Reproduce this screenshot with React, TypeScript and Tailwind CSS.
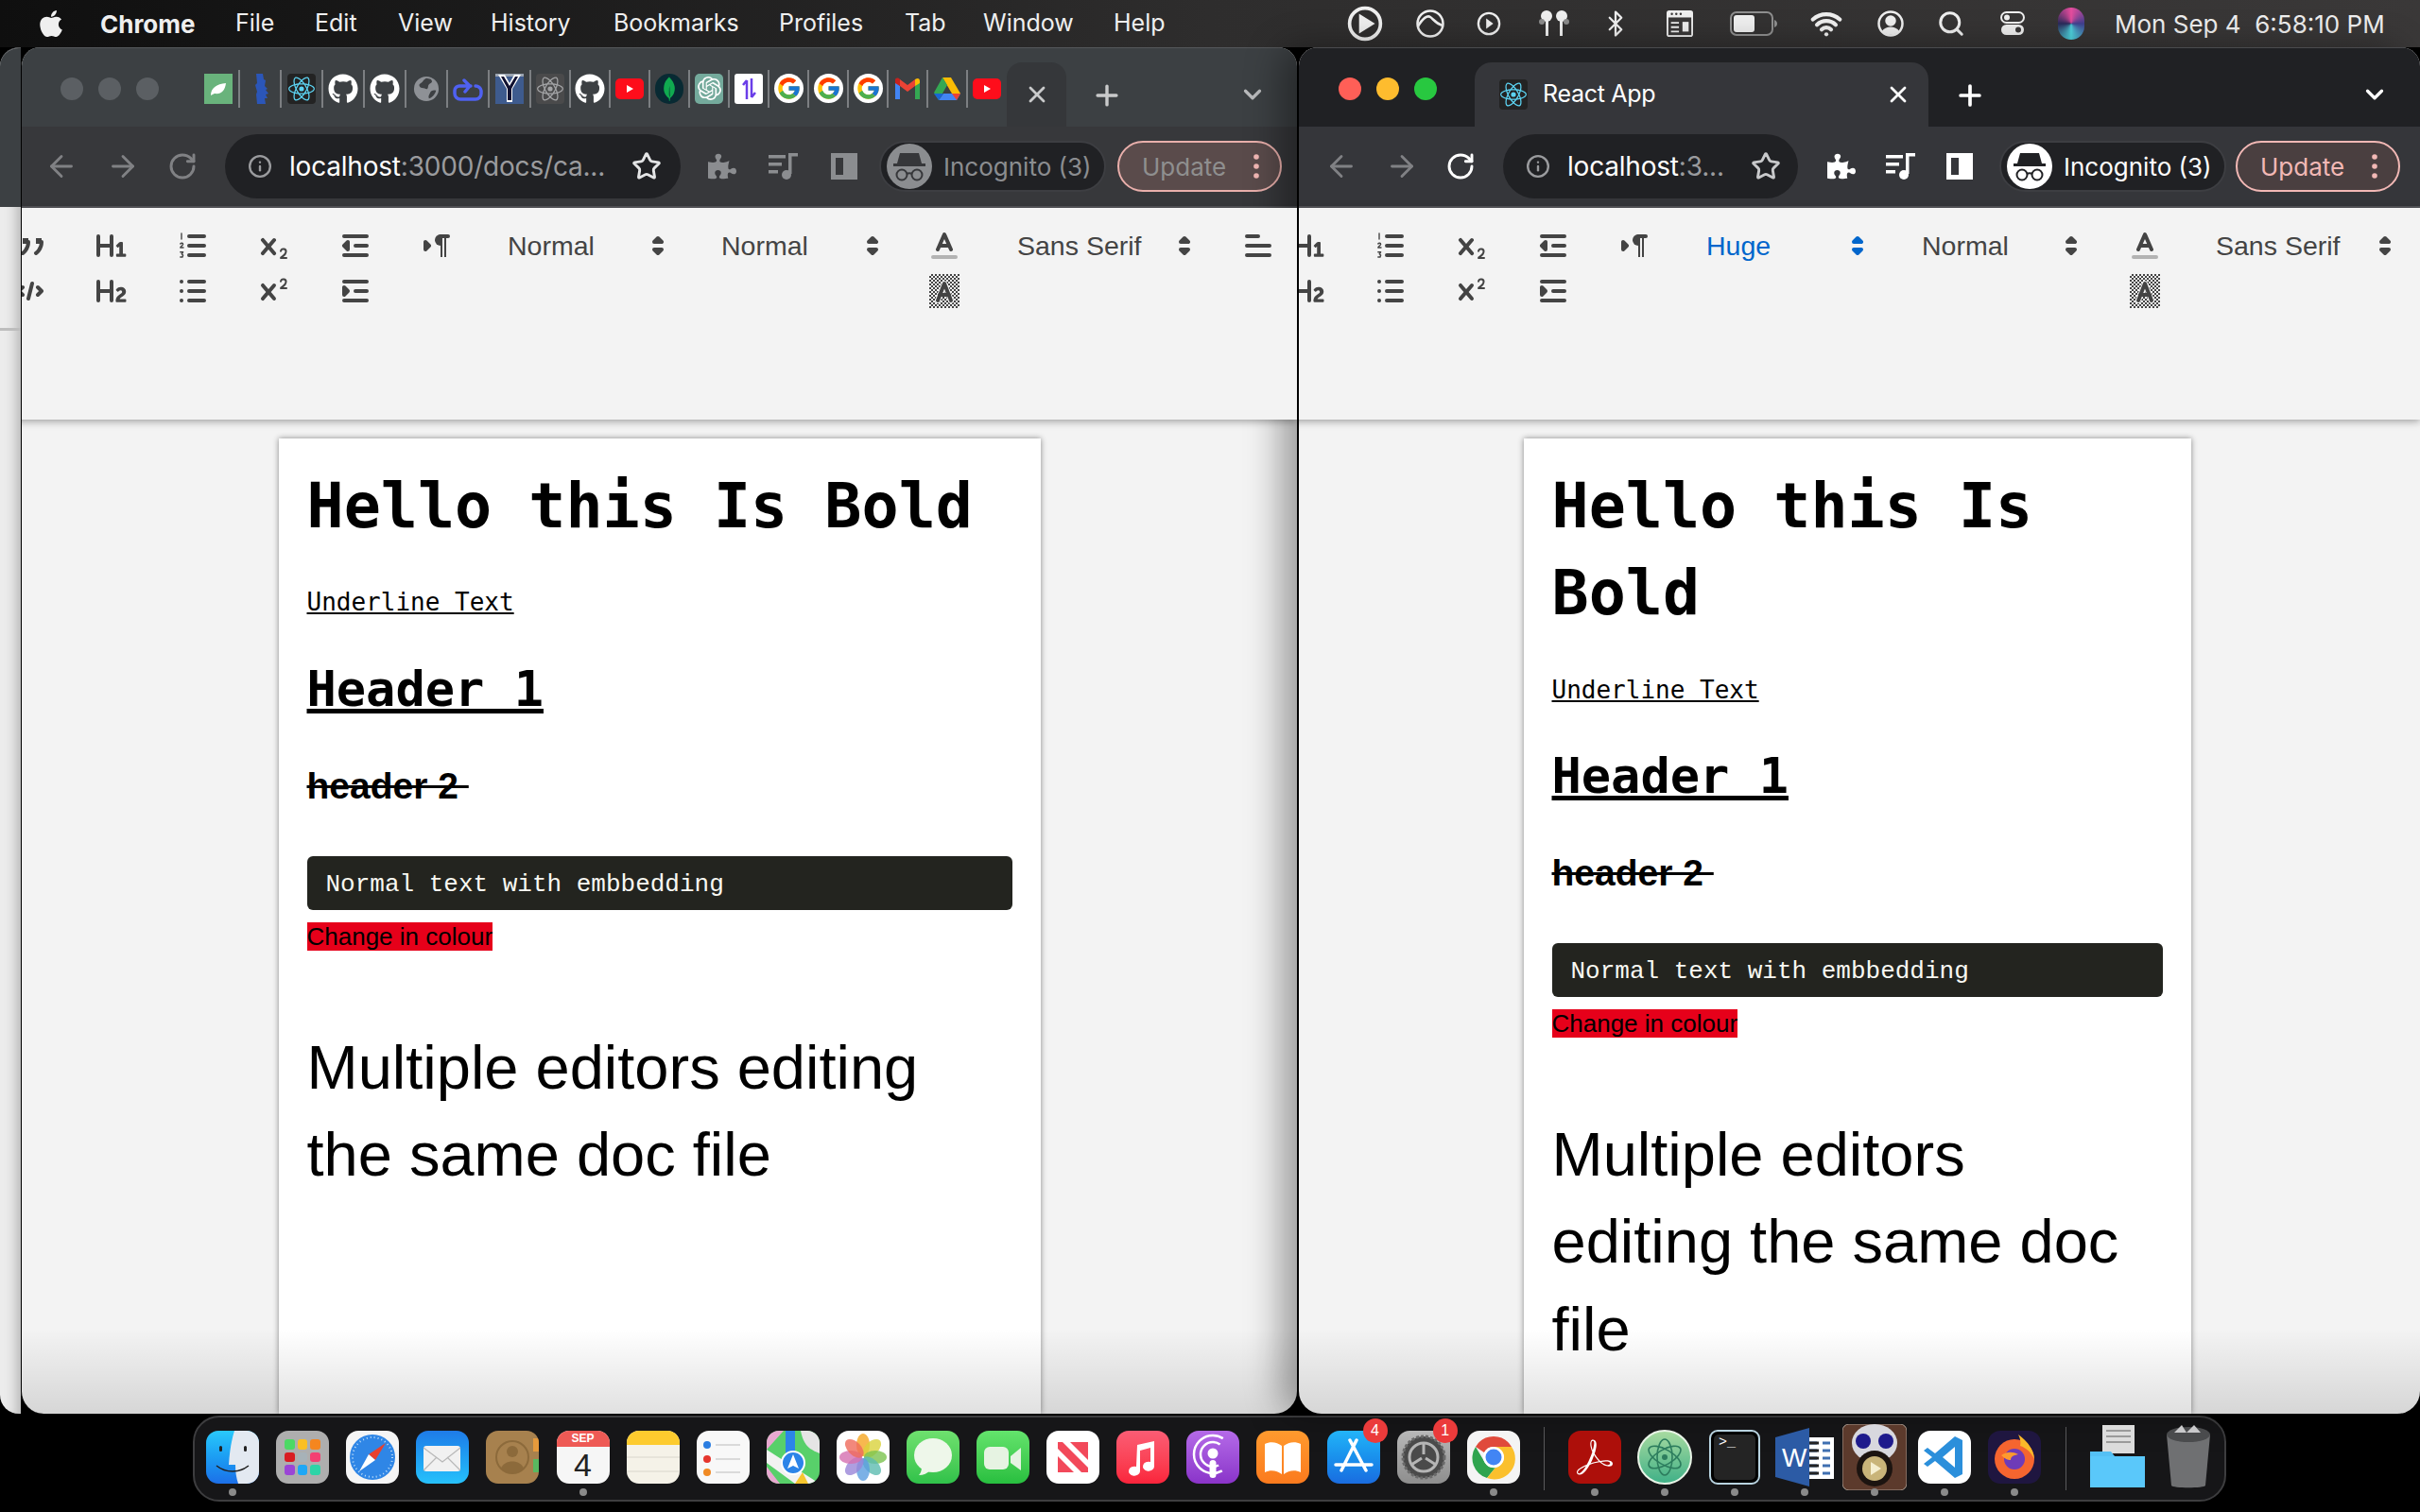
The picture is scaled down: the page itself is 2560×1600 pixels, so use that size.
import type { ReactNode } from "react";
import { ArrowLeft, ArrowRight, Bluetooth, Info, RotateCw, Search, Star, Wifi, X, Plus, ChevronDown } from "lucide-react";
import { FaApple, FaGithub, FaPuzzlePiece } from "react-icons/fa";
import { FcGoogle } from "react-icons/fc";
import { SiAdobeacrobatreader, SiMongodb, SiOpenai, SiReact } from "react-icons/si";

const sans = "[font-family:'Liberation_Sans',sans-serif]";
const ui = "[font-family:Inter,sans-serif]";
const mono = "[font-family:'DejaVu_Sans_Mono',monospace]";

/* ---------- quill toolbar icons ---------- */

function Q({ children }: { children: ReactNode }) {
  return (
    <svg viewBox="0 0 18 18" className="w-[36px] h-[36px]" fill="none" stroke="#444" strokeWidth={2} strokeLinecap="round" strokeLinejoin="round">
      {children}
    </svg>
  );
}

const qf = { fill: "#444", stroke: "none" };

const Quote = () => (
  <Q>
    <rect x="5" y="5" width="3" height="3" {...qf} />
    <rect x="12" y="5" width="3" height="3" {...qf} />
    <path d="M8 7c0 4-3 6-3 6M15 7c0 4-3 6-3 6" />
  </Q>
);
const CodeIcon = () => (
  <Q>
    <path d="M5 7L3 9l2 2M13 7l2 2-2 2M10 5L8 13" />
  </Q>
);
const H1 = () => (
  <Q>
    <path {...qf} d="M10,4V14a1,1,0,0,1-2,0V10H3v4a1,1,0,0,1-2,0V4A1,1,0,0,1,3,4V8H8V4a1,1,0,0,1,2,0Zm6.06787,9.209H14.98975V7.59863a.54085.54085,0,0,0-.605-.60547h-.62744a1.01119,1.01119,0,0,0-.748.29688L11.645,8.56641a.5435.5435,0,0,0-.022.8584l.28613.30762a.53861.53861,0,0,0,.84717.0332l.09912-.08789a1.2137,1.2137,0,0,0,.2417-.35254h.02246s-.01123.30859-.01123.60547V13.209H12.041a.54085.54085,0,0,0-.605.60547v.43945a.54085.54085,0,0,0,.605.60547h4.02686a.54085.54085,0,0,0,.605-.60547v-.43945A.54085.54085,0,0,0,16.06787,13.209Z" />
  </Q>
);
const H2 = () => (
  <Q>
    <path {...qf} d="M16.73975,13.81445v.43945a.54085.54085,0,0,1-.605.60547H11.855a.58392.58392,0,0,1-.64893-.60547V14.0127c0-2.90527,3.39941-3.42187,3.39941-4.55469a.77675.77675,0,0,0-.84717-.78125,1.17684,1.17684,0,0,0-.83594.38477c-.2749.26367-.561.374-.85791.13184l-.4292-.34082c-.30811-.24219-.38525-.51758-.1543-.81445a2.97155,2.97155,0,0,1,2.45361-1.17676,2.45393,2.45393,0,0,1,2.68408,2.40918c0,2.45312-3.1792,2.92676-3.27832,3.93848h2.79443A.54085.54085,0,0,1,16.73975,13.81445ZM9,3A.99974.99974,0,0,0,8,4V8H3V4A1,1,0,0,0,1,4V14a1,1,0,0,0,2,0V10H8v4a1,1,0,0,0,2,0V4A.99974.99974,0,0,0,9,3Z" />
  </Q>
);
const ListOl = () => (
  <Q>
    <path d="M7 4h8M7 9h8M7 14h8" />
    <path strokeWidth={0.7} d="M3 2.5v3M2.4 8c.4-.6 1.4-.5 1.4.2 0 .6-1.4 1.2-1.4 1.8h1.6M2.4 12.4h1.4l-.7 1 .7.6-.3 1h-1.1" />
  </Q>
);
const ListUl = () => (
  <Q>
    <path d="M7 4h8M7 9h8M7 14h8M3 4h.01M3 9h.01M3 14h.01" />
  </Q>
);
const Sub = () => (
  <Q>
    <path {...qf} d="M15.5,15H13.861a3.858,3.858,0,0,0,1.914-2.975,1.8,1.8,0,0,0-1.6-1.751A1.921,1.921,0,0,0,12.021,11.7a0.50013,0.50013,0,1,0,.957.291h0a0.914,0.914,0,0,1,1.053-.725,0.81,0.81,0,0,1,.744.762c0,1.076-1.16971,1.86982-1.93971,2.43082A1.45639,1.45639,0,0,0,12,15.5a0.5,0.5,0,0,0,.5.5h3A0.5,0.5,0,0,0,15.5,15Z" />
    <path {...qf} d="M9.65,5.241a1,1,0,0,0-1.409.108L6,7.964,3.759,5.349A1,1,0,0,0,2.192,6.59178Q2.21541,6.6213,2.241,6.649L4.684,9.5,2.241,12.35A1,1,0,0,0,3.71,13.70722q0.02557-.02768.049-0.05722L6,11.036,8.241,13.65a1,1,0,1,0,1.567-1.24277Q9.78459,12.3777,9.759,12.35L7.316,9.5,9.759,6.651A1,1,0,0,0,9.65,5.241Z" />
  </Q>
);
const Sup = () => (
  <Q>
    <path {...qf} d="M15.5,7H13.861a4.015,4.015,0,0,0,1.914-2.975,1.8,1.8,0,0,0-1.6-1.751A1.922,1.922,0,0,0,12.021,3.7a0.5,0.5,0,1,0,.957.291,0.917,0.917,0,0,1,1.053-.725,0.81,0.81,0,0,1,.744.762c0,1.077-1.164,1.925-1.934,2.486A1.423,1.423,0,0,0,12,7.5a0.5,0.5,0,0,0,.5.5h3A0.5,0.5,0,0,0,15.5,7Z" />
    <path {...qf} d="M9.651,5.241a1,1,0,0,0-1.41.108L6,7.964,3.759,5.349a1,1,0,1,0-1.519,1.3L4.683,9.5,2.241,12.35a1,1,0,1,0,1.519,1.3L6,11.036l2.241,2.615a1,1,0,0,0,1.519-1.3L7.317,9.5,9.759,6.651A1,1,0,0,0,9.651,5.241Z" />
  </Q>
);
const Outdent = () => (
  <Q>
    <path d="M3 14h12M3 4h12M9 9h6" />
    <path d="M5 7v4L3 9z" fill="#444" />
  </Q>
);
const Indent = () => (
  <Q>
    <path d="M3 14h12M3 4h12M9 9h6" />
    <path d="M3 7v4l2-2z" fill="#444" />
  </Q>
);
const Rtl = () => (
  <Q>
    <path d="M3 11l2-2-2-2z" fill="#444" />
    <path d="M15 4h-4" />
    <path {...qf} d="M11 3a3 3 0 0 0 0 6h1V3h-1z" />
    <rect x="11" y="4" width="1" height="11" {...qf} />
    <rect x="13" y="4" width="1" height="11" {...qf} />
  </Q>
);
const Color = () => (
  <Q>
    <path d="M3 15h12" stroke="#b3b3b3" />
    <path d="M5.5 11L9 3l3.5 8M11.63 9H6.38" />
  </Q>
);
const Background = ({ id }: { id: string }) => (
  <svg viewBox="0 0 18 18" className="w-[36px] h-[36px]" fill="none" stroke="#444" strokeWidth={2} strokeLinecap="round" strokeLinejoin="round">
    <defs>
      <pattern id={id} width="2" height="2" patternUnits="userSpaceOnUse">
        <rect width="1" height="1" fill="#444" stroke="none" />
        <rect x="1" y="1" width="1" height="1" fill="#444" stroke="none" />
      </pattern>
    </defs>
    <rect x="1" y="0" width="16" height="18" fill={`url(#${id})`} stroke="none" />
    <path d="M5.5 14L9 5l3.5 9" stroke="#f3f3f3" strokeWidth={3} />
    <path d="M5.5 14L9 5l3.5 9M11.6 11H6.4" />
  </svg>
);
const AlignIcon = () => (
  <Q>
    <path d="M3 9h12M3 14h12M3 4h6" />
  </Q>
);

function Picker({ label, box, active }: { label: string; box: string; active?: boolean }) {
  const c = active ? "#06c" : "#444";
  return (
    <div className={`flex items-center justify-between shrink-0 h-[48px] text-[28.5px] ${box}`} style={{ color: c }}>
      <span>{label}</span>
      <svg viewBox="0 0 18 18" className="w-[36px] h-[36px]" fill={c} stroke={c} strokeWidth={2} strokeLinejoin="round">
        <polygon points="7 11 9 13 11 11 7 11" />
        <polygon points="7 7 9 5 11 7 7 7" />
      </svg>
    </div>
  );
}

function IconCol({ a, b }: { a: ReactNode; b?: ReactNode }) {
  return (
    <div className="flex flex-col items-center shrink-0 w-[86px]">
      <div className="h-[48px] flex items-center">{a}</div>
      {b && <div className="h-[48px] flex items-center">{b}</div>}
    </div>
  );
}

function QuillToolbar({ active }: { active?: boolean }) {
  return (
    <div className={`relative z-10 h-[224px] shrink-0 bg-[#f3f3f3] shadow-[0_2px_8px_rgba(0,0,0,0.35)] overflow-hidden flex items-start pt-[16px] ${sans} ${active ? "pl-[0px] ml-[-32px]" : "ml-[-34px]"}`}>
      {!active && <IconCol a={<Quote />} b={<CodeIcon />} />}
      <IconCol a={<H1 />} b={<H2 />} />
      <IconCol a={<ListOl />} b={<ListUl />} />
      <IconCol a={<Sub />} b={<Sup />} />
      <IconCol a={<Outdent />} b={<Indent />} />
      <IconCol a={<Rtl />} />
      {active ? (
        <>
          <Picker label="Huge" box="w-[232px] pl-[33px] pr-[21px]" active />
          <Picker label="Normal" box="w-[222px] pl-[29px] pr-[17px]" />
          <IconCol a={<Color />} b={<Background id="ditherB" />} />
          <Picker label="Sans Serif" box="w-[246px] pl-[32px] pr-[17px]" />
        </>
      ) : (
        <>
          <Picker label="Normal" box="w-[229px] pl-[32px] pr-[20px]" />
          <Picker label="Normal" box="w-[222px] pl-[29px] pr-[15px]" />
          <IconCol a={<Color />} b={<Background id="ditherA" />} />
          <Picker label="Sans Serif" box="w-[246px] pl-[34px] pr-[17px]" />
          <IconCol a={<AlignIcon />} />
        </>
      )}
    </div>
  );
}

/* ---------- favicons ---------- */

function GIcon() {
  return (
    <div className="w-[31px] h-[31px] rounded-full bg-white flex items-center justify-center">
      <FcGoogle size={27} />
    </div>
  );
}
const Gh = () => <FaGithub size={32} color="#fff" />;
function YouTube() {
  return (
    <svg viewBox="0 0 30 22" className="w-[30px] h-[22px]">
      <rect width="30" height="22" rx="5" fill="#fe0d1b" />
      <path d="M12 7l7 4-7 4z" fill="#fff" />
    </svg>
  );
}

const favicons: ReactNode[] = [
  <svg viewBox="0 0 30 32" className="w-[30px] h-[32px]">
    <rect width="30" height="32" fill="#69b37c" />
    <path d="M7 23c0-8 6-12 16-13-1 8-5 12-12 11-1 0-2 1-4 2z" fill="#fff" />
  </svg>,
  <svg viewBox="0 0 30 32" className="w-[30px] h-[32px]">
    <path d="M11 0h7l1 6 2 1-1 6 3 3-2 1 3 4-3 1 2 4-3 0 1 6h-9l-1-10 1-3-2-7 2-2z" fill="#2b56b8" />
  </svg>,
  <div className="w-[30px] h-[32px] rounded-[4px] bg-[#232323] flex items-center justify-center">
    <SiReact size={28} color="#5cd3f2" />
  </div>,
  <Gh />,
  <Gh />,
  <svg viewBox="0 0 30 30" className="w-[28px] h-[28px]">
    <circle cx="15" cy="15" r="14" fill="#8e9196" />
    <path d="M15 3c-4 2-4 5-7 6-2 1-1 4 2 5 3 0 5 2 6 1 2-2 0-4 3-6 3-1 3-3 1-5zM26 17c-3-1-6 0-7 3-1 2-2 3-1 6 4-1 7-5 8-9z" fill="#3d4043" />
  </svg>,
  <svg viewBox="0 0 32 30" className="w-[32px] h-[30px]" fill="none" stroke="#4f61f2" strokeWidth="3.5" strokeLinecap="round" strokeLinejoin="round">
    <path d="M19 12H8a5 5 0 0 0-6 5v3a6 6 0 0 0 6 6h16a6 6 0 0 0 6-6v-3a6 6 0 0 0-6-5M12 6l6 6-5 6" />
  </svg>,
  <svg viewBox="0 0 30 32" className="w-[30px] h-[32px]">
    <rect width="30" height="32" fill="#3e5b8e" />
    <rect width="30" height="3" fill="#9aa3b0" />
    <path d="M3 1h7l5 9 5-9h7l-9 15v14h-6V16z" fill="#fff" />
    <path d="M6 3h3l6 10 6-10h3l-7 13v12h-4V16z" fill="#101030" />
  </svg>,
  <div className="w-[30px] h-[32px] rounded-[4px] bg-[#4a4a4b] flex items-center justify-center">
    <SiReact size={28} color="#a3a4a6" />
  </div>,
  <Gh />,
  <YouTube />,
  <div className="w-[30px] h-[32px] rounded-full bg-[#082a33] flex items-center justify-center">
    <SiMongodb size={26} color="#10aa50" />
  </div>,
  <div className="w-[30px] h-[32px] rounded-[5px] bg-[#74aa9c] flex items-center justify-center">
    <SiOpenai size={25} color="#fff" />
  </div>,
  <svg viewBox="0 0 30 32" className="w-[30px] h-[32px]">
    <rect width="30" height="32" rx="3" fill="#fff" />
    <path d="M13 7v20M13 7l-4 5M18 5v20M18 25l4-5" stroke="#6a3de8" strokeWidth="2.5" fill="none" />
  </svg>,
  <GIcon />,
  <GIcon />,
  <GIcon />,
  <svg viewBox="0 0 30 26" className="w-[30px] h-[26px]">
    <path d="M2 4v20h5V10z" fill="#4285f4" />
    <path d="M23 10v14h5V4z" fill="#34a853" />
    <path d="M7 10l8 6 8-6V3l-8 6-8-6z" fill="#ea4335" />
    <path d="M2 4c0-3 3-3 5-1v7L2 7z" fill="#c5221f" />
    <path d="M23 3c3-2 5-1 5 2v2l-5 3z" fill="#fbbc04" />
  </svg>,
  <svg viewBox="0 0 30 26" className="w-[30px] h-[26px]">
    <path d="M10 1h9l10 17h-9z" fill="#fbbc04" />
    <path d="M10 1l5 8-9 16-5-8z" fill="#34a853" />
    <path d="M6 25l5-7h18l-4 7z" fill="#4285f4" />
    <path d="M25 25l-5-7h9z" fill="#ea4335" />
    <path d="M6 25l5-7H1z" fill="#1967d2" />
  </svg>,
  <YouTube />,
];

/* ---------- browser window ---------- */

function Incognito({ dim }: { dim?: boolean }) {
  const bg = dim ? "#8b8d90" : "#fff";
  const fg = dim ? "#36373a" : "#202124";
  return (
    <svg viewBox="0 0 48 48" className="w-[48px] h-[48px] shrink-0">
      <circle cx="24" cy="24" r="24" fill={bg} />
      <path d="M14 10l20 0 3 11H11z" fill={fg} />
      <rect x="7" y="21" width="34" height="3" fill={fg} />
      <g fill="none" stroke={fg} strokeWidth="2">
        <circle cx="16" cy="33" r="5.5" />
        <circle cx="32" cy="33" r="5.5" />
        <path d="M21 32c2-1 4-1 6 0" />
      </g>
    </svg>
  );
}

function MediaIcon({ c }: { c: string }) {
  return (
    <svg viewBox="0 0 32 28" className="w-[32px] h-[28px]" fill={c}>
      <rect x="0" y="2" width="18" height="3.5" />
      <rect x="0" y="10" width="14" height="3.5" />
      <rect x="0" y="18" width="10" height="3.5" />
      <rect x="21" y="2" width="3.5" height="20" />
      <rect x="21" y="0" width="10" height="3.5" />
      <circle cx="19" cy="23" r="5" />
    </svg>
  );
}

function SidePanel({ c }: { c: string }) {
  return (
    <svg viewBox="0 0 28 28" className="w-[28px] h-[28px]">
      <path fillRule="evenodd" d="M0 0h28v28H0zM5 5v18h8V5z" fill={c} />
    </svg>
  );
}

function Toolbar({ active }: { active?: boolean }) {
  const dim = !active;
  const ic = dim ? "#8b8d90" : "#fff";
  const off = "#808184";
  return (
    <div className={`h-[84px] shrink-0 flex items-center ${active ? "bg-[#35363a]" : "bg-[#37383b]"} ${ui}`}>
      <div className={`flex items-center shrink-0 ${active ? "pl-[27px] gap-[28px]" : "pl-[24px] gap-[29px]"}`}>
        <ArrowLeft size={36} color={off} strokeWidth={1.9} />
        <ArrowRight size={36} color={off} strokeWidth={1.9} />
        <RotateCw size={32} color={active ? "#fff" : off} strokeWidth={2.2} />
      </div>
      <div className={`h-[68px] rounded-full bg-[#202124] flex items-center shrink-0 pl-[24px] ${active ? "w-[312px] ml-[29px]" : "w-[482px] ml-[29px]"}`}>
        <Info size={26} color="#9a9b9e" strokeWidth={2.2} />
        <span className="ml-[18px] text-[28px] tracking-[-0.2px] text-white whitespace-pre">
          localhost
          <span className="text-[#9a9b9e]">{active ? ":3..." : ":3000/docs/ca..."}</span>
        </span>
        <Star size={32} color={active ? "#c8c9cb" : "#e4e5e6"} strokeWidth={2.2} className={active ? "ml-auto mr-[18px]" : "ml-auto mr-[20px]"} />
      </div>
      <div className={`flex items-center shrink-0 ${active ? "ml-[31px] gap-[32px]" : "ml-[29px] gap-[34px]"}`}>
        <FaPuzzlePiece size={30} color={ic} />
        <MediaIcon c={ic} />
        <SidePanel c={ic} />
      </div>
      <div className={`h-[54px] rounded-full bg-[#202124] border-2 border-[#3d3e42] flex items-center shrink-0 w-[240px] pl-[6px] ${active ? "ml-[28px] text-white" : "ml-[23px] text-[#8b8d90]"}`}>
        <Incognito dim={dim} />
        <span className="ml-[12px] text-[26px]">Incognito (3)</span>
      </div>
      <div className={`h-[54px] rounded-full border-2 flex items-center shrink-0 w-[174px] pl-[24px] ${active ? "ml-[10px] border-[#f2b8b5] bg-[#4a3f40] text-[#f2b8b5]" : "ml-[12px] border-[#e9afab] bg-[#5a4b4b] text-[#8f8f8f]"}`}>
        <span className="text-[26px]">Update</span>
        <svg viewBox="0 0 6 26" className="w-[6px] h-[26px] ml-auto mr-[22px]" fill="#f2b8b5">
          <circle cx="3" cy="3" r="2.8" />
          <circle cx="3" cy="13" r="2.8" />
          <circle cx="3" cy="23" r="2.8" />
        </svg>
      </div>
    </div>
  );
}

function Dots({ active }: { active?: boolean }) {
  const colors = active ? ["bg-[#ff5f57]", "bg-[#febc2e]", "bg-[#28c840]"] : ["bg-[#5b5f63]", "bg-[#5b5f63]", "bg-[#5b5f63]"];
  return (
    <div className="flex gap-[16px] pt-[31px] shrink-0">
      {colors.map((c, i) => (
        <div key={i} className={`w-[24px] h-[24px] rounded-full ${c}`} />
      ))}
    </div>
  );
}

function TitleBarLeft() {
  return (
    <div className="h-[84px] shrink-0 flex items-start bg-[#3c4043] border-t border-[#55585b] pl-[41px] relative">
      <Dots />
      <div className="ml-[41px] flex pt-[15px] items-center h-[70px] shrink-0">
        {favicons.map((f, i) => (
          <div key={i} className={`h-[40px] flex items-center justify-center relative shrink-0 ${i < 8 ? "w-[44px]" : "w-[42px]"}`}>
            {f}
            {i < favicons.length - 1 && <div className="absolute right-[-1px] top-0 w-[2px] h-[40px] bg-[#7c7f82]" />}
          </div>
        ))}
      </div>
      <div className="mt-[15px] w-[63px] h-[68px] bg-[#35373a] rounded-t-[16px] flex items-center justify-center shrink-0">
        <X size={28} color="#c9cacb" strokeWidth={2.4} />
      </div>
      <Plus size={34} color="#c9cacb" strokeWidth={2.4} className="ml-[26px] mt-[33px] shrink-0" />
      <ChevronDown size={30} color="#b9babc" strokeWidth={2.6} className="ml-[122px] mt-[34px] shrink-0" />
    </div>
  );
}

function TitleBarRight() {
  return (
    <div className="h-[84px] shrink-0 flex items-start bg-[#202124] border-t border-[#4a4b4e] pl-[42px]">
      <Dots active />
      <div className={`ml-[40px] mt-[15px] w-[480px] h-[68px] bg-[#35363a] rounded-t-[18px] flex items-center pl-[26px] pr-[18px] shrink-0 ${ui}`}>
        <div className="w-[30px] h-[32px] rounded-[4px] bg-[#232323] flex items-center justify-center">
          <SiReact size={28} color="#5cd3f2" />
        </div>
        <span className="ml-[16px] text-[25px] tracking-[-0.3px] text-white">React App</span>
        <X size={28} color="#fff" strokeWidth={2.4} className="ml-auto" />
      </div>
      <Plus size={34} color="#fff" strokeWidth={2.6} className="ml-[27px] mt-[33px] shrink-0" />
      <ChevronDown size={30} color="#fff" strokeWidth={2.6} className="ml-[396px] mt-[34px] shrink-0" />
    </div>
  );
}

function Line({ children, className = "" }: { children?: ReactNode; className?: string }) {
  return <p className={`leading-[1.42] ${className}`}>{children ?? <br />}</p>;
}

function DocPage({ width }: { width: string }) {
  return (
    <div className={`bg-white ${width} shrink-0 px-[30px] pt-[26px] shadow-[0_0_6px_rgba(0,0,0,0.45)] text-[26px] text-black ${sans}`}>
      <Line className={`text-[65px] font-bold ${mono}`}>Hello this Is Bold</Line>
      <Line />
      <Line className={`underline ${mono}`}>Underline Text</Line>
      <Line />
      <Line className={`text-[52px] font-bold underline ${mono}`}>Header 1</Line>
      <Line />
      <Line className="text-[39px] font-bold line-through whitespace-pre">{"header 2 "}</Line>
      <Line />
      <pre className="my-[10px] h-[57px] rounded-[6px] bg-[#23241f] px-[20px] pt-[12px] pb-[8px] text-[26px] leading-[1.42] text-[#f8f8f2] [font-family:'Liberation_Mono',monospace]">
        Normal text with embbedding
      </pre>
      <Line>
        <span className="bg-[#e6001a]">Change in colour</span>
      </Line>
      <Line />
      <Line />
      <Line className="text-[65px]">Multiple editors editing the same doc file</Line>
    </div>
  );
}

function BrowserWindow({ active, className }: { active?: boolean; className: string }) {
  return (
    <div className={`relative flex flex-col overflow-hidden rounded-[20px] rounded-b-[24px] bg-[#f3f3f3] ${className}`}>
      {active ? <TitleBarRight /> : <TitleBarLeft />}
      <Toolbar active={active} />
      <div className="h-[2px] shrink-0 bg-[#55565a]" />
      <QuillToolbar active={active} />
      <div className={`flex-1 flex justify-center pt-[20px] min-h-0 ${active ? "pr-[5px]" : ""}`}>
        <DocPage width={active ? "w-[706px]" : "w-[806px]"} />
      </div>
      <div className="absolute bottom-0 left-0 right-0 h-[90px] bg-gradient-to-t from-black/12 to-transparent" />
    </div>
  );
}

/* ---------- menu bar ---------- */

function StatusIcons() {
  const c = "#efefef";
  return (
    <div className="flex items-center gap-0 h-full">
      <svg viewBox="0 0 36 36" className="w-[38px] h-[38px]" fill="none" stroke={c} strokeWidth="3.5">
        <circle cx="18" cy="18" r="15.5" />
        <path d="M12 8l16 10-16 10z" fill={c} stroke="none" />
      </svg>
      <svg viewBox="0 0 30 32" className="w-[30px] h-[32px] ml-[35px]" fill="none" stroke={c} strokeWidth="2.5">
        <circle cx="15" cy="16" r="13.5" />
        <path d="M2 19c5-9 10-12 13-10s6 7 13 9" />
      </svg>
      <svg viewBox="0 0 28 28" className="w-[26px] h-[26px] ml-[34px]" fill="none" stroke={c} strokeWidth="2.5">
        <circle cx="14" cy="14" r="12" />
        <path d="M11 8l8 6-8 6z" fill={c} stroke="none" />
      </svg>
      <svg viewBox="0 0 34 30" className="w-[34px] h-[30px] ml-[39px]" fill={c}>
        <circle cx="9" cy="7" r="6" />
        <rect x="8" y="8" width="3" height="20" />
        <circle cx="25" cy="7" r="6" />
        <rect x="23" y="8" width="3" height="20" />
        <circle cx="4" cy="13" r="3" fill="#8b8b8b" />
        <circle cx="30" cy="13" r="3" fill="#8b8b8b" />
      </svg>
      <Bluetooth size={30} color={c} strokeWidth={1.8} className="ml-[33px]" />
      <svg viewBox="0 0 30 30" className="w-[28px] h-[28px] ml-[39px]">
        <rect width="30" height="30" rx="3" fill={c} />
        <rect x="2" y="8" width="26" height="20" fill="#3a3838" />
        <circle cx="6" cy="4" r="1.3" fill="#3a3838" />
        <circle cx="11" cy="4" r="1.3" fill="#3a3838" />
        <circle cx="16" cy="4" r="1.3" fill="#3a3838" />
        <path d="M5 13h9v2H5zM5 18h9v2H5zM5 23h9v2H5z" fill={c} />
        <path d="M18 13h7v11h-7z" fill={c} />
      </svg>
      <svg viewBox="0 0 50 26" className="w-[50px] h-[26px] ml-[39px]">
        <rect x="1" y="1" width="44" height="24" rx="6" fill="none" stroke="#8f8f8f" strokeWidth="2" />
        <rect x="4" y="4" width="22" height="18" rx="3" fill={c} />
        <path d="M47 9c2 1 3 2 3 4s-1 3-3 4z" fill="#8f8f8f" />
      </svg>
      <Wifi size={34} color={c} strokeWidth={3} className="ml-[35px]" />
      <svg viewBox="0 0 28 28" className="w-[28px] h-[28px] ml-[37px]" fill="none" stroke={c} strokeWidth="2.5">
        <circle cx="14" cy="14" r="12.5" />
        <circle cx="14" cy="11" r="4.5" fill={c} />
        <path d="M5 22c3-6 15-6 18 0-4 5-14 5-18 0z" fill={c} stroke="none" />
      </svg>
      <Search size={30} color={c} strokeWidth={2.4} className="ml-[35px]" />
      <svg viewBox="0 0 28 28" className="w-[28px] h-[28px] ml-[36px]">
        <rect x="2" y="2" width="24" height="11" rx="5.5" fill="none" stroke={c} strokeWidth="2" />
        <circle cx="8" cy="7.5" r="3" fill={c} />
        <rect x="2" y="15" width="24" height="11" rx="5.5" fill={c} />
        <circle cx="20" cy="20.5" r="3" fill="#3a3838" />
      </svg>
      <div className="w-[28px] h-[34px] rounded-full ml-[34px] bg-[conic-gradient(#e64d9e,#3f3f8f,#4fd6e0,#2a2a5a,#e64d9e)]" />
    </div>
  );
}

function MenuBar() {
  const items = [
    ["File", "w-[84px]"],
    ["Edit", "w-[88px]"],
    ["View", "w-[98px]"],
    ["History", "w-[130px]"],
    ["Bookmarks", "w-[175px]"],
    ["Profiles", "w-[133px]"],
    ["Tab", "w-[83px]"],
    ["Window", "w-[138px]"],
    ["Help", "w-[60px]"],
  ];
  return (
    <div className={`h-[50px] shrink-0 flex items-center bg-gradient-to-r from-[#0f0f0f] via-[#2e2d2d] to-[#3a3838] text-[#efefef] text-[25px] ${ui}`}>
      <FaApple size={32} color="#efefef" className="ml-[38px] mr-[36px] shrink-0" />
      <span className="font-bold w-[143px] shrink-0 text-[26px]">Chrome</span>
      {items.map(([t, w]) => (
        <span key={t} className={`${w} shrink-0`}>
          {t}
        </span>
      ))}
      <div className="ml-[187px] shrink-0 h-full">
        <StatusIcons />
      </div>
      <span className="ml-[32px] whitespace-pre shrink-0 text-[26px]">{"Mon Sep 4  6:58:10 PM"}</span>
    </div>
  );
}

/* ---------- dock ---------- */

function Tile({ children, bg }: { children?: ReactNode; bg: string }) {
  return <div className={`relative w-[56px] h-[56px] rounded-[13px] overflow-hidden ${bg}`}>{children}</div>;
}

const S56 = ({ children }: { children: ReactNode }) => (
  <svg viewBox="0 0 56 56" className="absolute inset-0 w-[56px] h-[56px]">
    {children}
  </svg>
);

const dockLeft: { key: string; node: ReactNode; on?: boolean; badge?: string }[] = [
  {
    key: "finder",
    on: true,
    node: (
      <Tile bg="bg-gradient-to-b from-[#2ac9fb] to-[#1d6fe8]">
        <S56>
          <path d="M30 0h26v56H34c-2-6-3-12-3-20H24C25 20 27 10 30 0z" fill="#e3e9f1" />
          <rect x="14" y="16" width="3" height="6" rx="1.5" fill="#222" />
          <rect x="40" y="16" width="3" height="6" rx="1.5" fill="#222" />
          <path d="M11 37c10 8 24 8 34 0" fill="none" stroke="#222" strokeWidth="1.6" />
        </S56>
      </Tile>
    ),
  },
  {
    key: "launchpad",
    node: (
      <Tile bg="bg-[#aeaeae]">
        <div className="absolute inset-[9px] grid grid-cols-3 gap-[3px]">
          {["bg-[#4cd964]", "bg-[#fbbf24]", "bg-[#f5861f]", "bg-[#d91c22]", "bg-[#a7b2b8]", "bg-[#f43f72]", "bg-[#9b45d6]", "bg-[#1ea7f5]", "bg-[#2dd4a7]"].map((c) => (
            <div key={c} className={`rounded-[3px] ${c}`} />
          ))}
        </div>
      </Tile>
    ),
  },
  {
    key: "safari",
    node: (
      <Tile bg="bg-[#f5f5f5]">
        <S56>
          <circle cx="28" cy="28" r="24" fill="#2f86e6" />
          <circle cx="28" cy="28" r="21" fill="none" stroke="#bcdcf8" strokeWidth="2" strokeDasharray="1 3" />
          <path d="M42 13L24 25l7 6z" fill="#e8402f" />
          <path d="M14 43l10-18 7 6z" fill="#fff" />
        </S56>
      </Tile>
    ),
  },
  {
    key: "mail",
    node: (
      <Tile bg="bg-gradient-to-b from-[#1f7be8] to-[#27c1fb]">
        <S56>
          <rect x="8" y="16" width="39" height="27" rx="3" fill="#f1f1f1" />
          <path d="M8 18l20 15 19-15M8 42l14-14M47 42L33 28" fill="none" stroke="#b8b8b8" strokeWidth="1.2" />
        </S56>
      </Tile>
    ),
  },
  {
    key: "contacts",
    node: (
      <Tile bg="bg-[#a7814e]">
        <S56>
          <rect x="50" y="8" width="6" height="14" fill="#e69a3c" />
          <rect x="50" y="30" width="6" height="14" fill="#59b860" />
          <circle cx="28" cy="28" r="17" fill="none" stroke="#8c6a3b" strokeWidth="2" />
          <circle cx="28" cy="22" r="6" fill="#8c6a3b" />
          <path d="M16 40c3-10 21-10 24 0-6 6-18 6-24 0z" fill="#8c6a3b" />
        </S56>
      </Tile>
    ),
  },
  {
    key: "calendar",
    on: true,
    node: (
      <Tile bg="bg-[#f6f6f6]">
        <div className={`h-[17px] bg-[#ee5a55] text-white text-[12px] font-bold leading-[17px] text-center ${sans}`}>SEP</div>
        <div className={`text-center text-[34px] leading-[38px] text-[#222] ${sans}`}>4</div>
      </Tile>
    ),
  },
  {
    key: "notes",
    node: (
      <Tile bg="bg-[#f5f2e8]">
        <div className="h-[15px] bg-[#fdcb2e]" />
        <S56>
          <path d="M0 28h56M0 43h56" stroke="#d9d6cc" strokeWidth="1" />
        </S56>
      </Tile>
    ),
  },
  {
    key: "reminders",
    node: (
      <Tile bg="bg-[#f8f8f8]">
        <S56>
          <circle cx="11" cy="15" r="4" fill="#2a7de1" />
          <circle cx="11" cy="30" r="4" fill="#e5352d" />
          <circle cx="11" cy="44" r="4" fill="#f08a24" />
          <path d="M20 15h26M20 30h26M20 44h26" stroke="#cfcfcf" strokeWidth="1.5" />
        </S56>
      </Tile>
    ),
  },
  {
    key: "maps",
    node: (
      <Tile bg="bg-[#58d06a]">
        <S56>
          <path d="M0 0h18L0 20zM0 38l14 18H0z" fill="#e8a8d0" />
          <path d="M20 0h10v30H20z" fill="#2c84e8" />
          <path d="M36 0c3 16 10 20 20 24V0z" fill="#e5e5e5" />
          <path d="M0 20L56 56H30L0 34z" fill="#f2f2f2" />
          <path d="M30 56h14l-6-12z" fill="#f6c62e" />
          <circle cx="28" cy="34" r="12" fill="#2c84e8" stroke="#fff" strokeWidth="2" />
          <path d="M28 25l6 15-6-3-6 3z" fill="#fff" />
        </S56>
      </Tile>
    ),
  },
  {
    key: "photos",
    node: (
      <Tile bg="bg-white">
        <S56>
          {["#f5a623", "#d9d23b", "#7cc34f", "#5cbcb0", "#5b9ee0", "#9a86d8", "#d46fb0", "#ef6a5b"].map((c, i) => (
            <ellipse key={c} cx="28" cy="15" rx="7" ry="12" fill={c} fillOpacity="0.8" transform={`rotate(${i * 45} 28 28)`} />
          ))}
        </S56>
      </Tile>
    ),
  },
  {
    key: "messages",
    node: (
      <Tile bg="bg-gradient-to-b from-[#6ee06e] to-[#2fc24a]">
        <S56>
          <ellipse cx="28" cy="26" rx="20" ry="18" fill="#eef7ea" />
          <path d="M16 38c0 4-1 7-3 9 5 0 9-2 12-5z" fill="#eef7ea" />
        </S56>
      </Tile>
    ),
  },
  {
    key: "facetime",
    node: (
      <Tile bg="bg-gradient-to-b from-[#63e36c] to-[#27bf3f]">
        <S56>
          <rect x="8" y="17" width="26" height="24" rx="6" fill="#e6f3e2" />
          <path d="M36 27l11-9v24l-11-8z" fill="#e6f3e2" />
        </S56>
      </Tile>
    ),
  },
  {
    key: "news",
    node: (
      <Tile bg="bg-white">
        <S56>
          <path d="M12 12h32v32H12z" fill="#f2495a" />
          <path d="M17 12l27 27v-8L25 12zM12 19l25 25h-8L12 27z" fill="#fff" />
        </S56>
      </Tile>
    ),
  },
  {
    key: "music",
    node: (
      <Tile bg="bg-gradient-to-b from-[#fb5c74] to-[#fa233b]">
        <S56>
          <path d="M22 15l18-4v27a6 5 0 1 1-4-5V18l-11 3v22a6 5 0 1 1-4-5z" fill="#fff" />
        </S56>
      </Tile>
    ),
  },
  {
    key: "podcasts",
    node: (
      <Tile bg="bg-gradient-to-b from-[#b56ae8] to-[#8a33c9]">
        <S56>
          <g fill="none" stroke="#fff" strokeWidth="2.5">
            <circle cx="28" cy="25" r="20" strokeDasharray="84 42" strokeDashoffset="-21" />
            <circle cx="28" cy="25" r="13" strokeDasharray="55 27" strokeDashoffset="-14" />
          </g>
          <circle cx="28" cy="24" r="5.5" fill="#fff" />
          <rect x="24.5" y="31" width="7" height="19" rx="3.5" fill="#fff" />
        </S56>
      </Tile>
    ),
  },
  {
    key: "books",
    node: (
      <Tile bg="bg-gradient-to-b from-[#ff9a2e] to-[#fb7a1d]">
        <S56>
          <path d="M9 14c6-3 13-2 18 2v30c-5-4-12-5-18-2zM47 14c-6-3-13-2-18 2v30c5-4 12-5 18-2z" fill="#fff" />
        </S56>
      </Tile>
    ),
  },
  {
    key: "appstore",
    badge: "4",
    node: (
      <Tile bg="bg-gradient-to-b from-[#23b4f8] to-[#1a6ce0]">
        <S56>
          <path d="M31 10L15 42M24 10l17 32M9 36h38" stroke="#fff" strokeWidth="3.5" strokeLinecap="round" />
        </S56>
      </Tile>
    ),
  },
  {
    key: "settings",
    badge: "1",
    node: (
      <Tile bg="bg-gradient-to-b from-[#b8b8b8] to-[#8e8e8e]">
        <S56>
          <circle cx="28" cy="28" r="22" fill="#4a4a4a" stroke="#6a6a6a" strokeWidth="3" strokeDasharray="3 2" />
          <circle cx="28" cy="28" r="15" fill="none" stroke="#b5b5b5" strokeWidth="3" />
          <path d="M28 13v12M15 36l11-7M41 36l-11-7" stroke="#b5b5b5" strokeWidth="3" />
        </S56>
      </Tile>
    ),
  },
  {
    key: "chrome",
    on: true,
    node: (
      <Tile bg="bg-[#f4f4f4]">
        <S56>
          <path d="M28 6a22 22 0 0 1 19 11H28a11 11 0 0 0-10 6L9 17A22 22 0 0 1 28 6z" fill="#e04a3b" />
          <path d="M9 17l10 17a11 11 0 0 0 11 5l-9 11A22 22 0 0 1 9 17z" fill="#2fa44f" />
          <path d="M47 17a22 22 0 0 1-26 33l9-11a11 11 0 0 0 7-17l-9-5z" fill="#fbc02d" />
          <circle cx="28" cy="28" r="11" fill="#fff" />
          <circle cx="28" cy="28" r="8.5" fill="#4285f4" />
        </S56>
      </Tile>
    ),
  },
];

const dockMiddle: { key: string; node: ReactNode }[] = [
  {
    key: "acrobat",
    node: (
      <Tile bg="bg-[#ad0f0a]">
        <div className="absolute inset-0 flex items-center justify-center">
          <SiAdobeacrobatreader size={38} color="#fff" />
        </div>
      </Tile>
    ),
  },
  {
    key: "atom",
    node: (
      <svg viewBox="0 0 60 60" className="w-[60px] h-[60px]">
        <defs>
          <linearGradient id="atomg" x1="0" y1="0" x2="0" y2="1">
            <stop offset="0" stopColor="#a8dba0" />
            <stop offset="1" stopColor="#3fb087" />
          </linearGradient>
        </defs>
        <circle cx="30" cy="30" r="28" fill="url(#atomg)" stroke="#e8f3e6" strokeWidth="2" />
        <g fill="none" stroke="#2d7d5e" strokeWidth="1.6">
          <ellipse cx="30" cy="30" rx="19" ry="8" transform="rotate(30 30 30)" />
          <ellipse cx="30" cy="30" rx="19" ry="8" transform="rotate(-30 30 30)" />
          <ellipse cx="30" cy="30" rx="19" ry="8" transform="rotate(90 30 30)" />
        </g>
        <circle cx="30" cy="30" r="3" fill="#2d7d5e" />
      </svg>
    ),
  },
  {
    key: "terminal",
    node: (
      <div className={`relative w-[54px] h-[58px] rounded-[9px] bg-black border-2 border-[#b8d3e0] p-[3px]`}>
        <div className={`w-full h-full rounded-[5px] bg-[#242424] text-white text-[15px] leading-[18px] pl-[5px] [font-family:'Liberation_Mono',monospace]`}>{">_"}</div>
      </div>
    ),
  },
  {
    key: "word",
    node: (
      <svg viewBox="0 0 62 62" className="w-[62px] h-[62px]">
        <rect x="32" y="10" width="30" height="44" fill="#fff" />
        <path d="M36 16h22M36 24h22M36 32h22M36 40h22M36 48h22" stroke="#3f6fb0" strokeWidth="3" strokeDasharray="8 6" />
        <path d="M36 16h10M36 24h10M36 32h10M36 40h10M36 48h10" stroke="#222" strokeWidth="3" />
        <path d="M0 10L36 0v62L0 52z" fill="#2c5ba5" />
        <text x="7" y="41" fontSize="28" fill="#fff" fontFamily="Liberation Sans">W</text>
      </svg>
    ),
  },
  {
    key: "player",
    node: (
      <svg viewBox="0 0 68 70" className="w-[68px] h-[70px]">
        <rect width="68" height="70" rx="7" fill="#5c3a2c" stroke="#ab9d92" strokeWidth="1" />
        <ellipse cx="34" cy="20" rx="24" ry="20" fill="#d8d8de" />
        <circle cx="22" cy="18" r="8" fill="#1e1a8c" />
        <circle cx="46" cy="18" r="8" fill="#1e1a8c" />
        <circle cx="34" cy="47" r="19" fill="#1c1410" />
        <circle cx="34" cy="47" r="13" fill="#c9b479" />
        <path d="M30 40l11 7-11 7z" fill="#f5eecf" />
      </svg>
    ),
  },
  {
    key: "vscode",
    node: (
      <Tile bg="bg-white">
        <S56>
          <path d="M39 6l8 4v36l-8 4-21-18-8 6-4-3 9-7-9-7 4-3 8 6z" fill="#2b8fdb" />
          <path d="M39 17L26 28l13 11z" fill="#fff" />
        </S56>
      </Tile>
    ),
  },
  {
    key: "firefox",
    node: (
      <Tile bg="bg-[#1f1640]">
        <S56>
          <circle cx="28" cy="30" r="21" fill="#f5652f" />
          <path d="M32 4c8 6 16 14 17 26-4-8-9-12-15-14 1-4 0-8-2-12z" fill="#fbb929" />
          <circle cx="28" cy="30" r="11" fill="#6e3bb8" />
          <path d="M14 26c6-4 12-4 18-1-6 1-8 3-8 6-3 0-6-1-10-5z" fill="#ff9a2e" />
        </S56>
      </Tile>
    ),
  },
];

function DockCell({ children, on, badge }: { children: ReactNode; on?: boolean; badge?: string }) {
  return (
    <div className="relative h-full flex flex-col items-center justify-end shrink-0 w-[74.1px]">
      <div className="relative h-[62px] flex items-center justify-center mb-[14px]">
        {children}
        {badge && (
          <span className={`absolute right-[-8px] top-[-10px] w-[26px] h-[26px] rounded-full bg-[#eb3b3b] text-white text-[16px] leading-[26px] text-center ${sans}`}>{badge}</span>
        )}
      </div>
      {on && <div className="absolute bottom-[4px] w-[8px] h-[8px] rounded-full bg-[#8a8a8a]" />}
    </div>
  );
}

function Dock() {
  return (
    <div className="flex-1 min-h-0 bg-black pt-[2px] pl-[204px]">
      <div className="w-[2151px] h-[91px] rounded-[28px] border-2 border-[#3d3d3f] bg-[#161618] flex items-stretch pl-[3px]">
        {dockLeft.map((d) => (
          <DockCell key={d.key} on={d.on} badge={d.badge}>
            {d.node}
          </DockCell>
        ))}
        <div className="w-[33px] shrink-0 flex justify-center pt-[10px] pb-[10px]">
          <div className="w-[1px] h-full bg-[#5a5a5c]" />
        </div>
        {dockMiddle.map((d) => (
          <DockCell key={d.key} on>
            {d.node}
          </DockCell>
        ))}
        <div className="w-[35px] shrink-0 flex justify-center pt-[10px] pb-[10px]">
          <div className="w-[1px] h-full bg-[#5a5a5c]" />
        </div>
        <DockCell>
          <svg viewBox="0 0 60 68" className="w-[60px] h-[68px]">
            <rect x="14" y="0" width="34" height="30" fill="#dcdcdc" />
            <path d="M18 6h26M18 12h26M18 18h26" stroke="#9a9a9a" strokeWidth="2" />
            <path d="M1 28h22l4 5h32v33H1z" fill="#54c0f4" />
            <rect x="1" y="33" width="58" height="33" fill="#5ac8fa" />
          </svg>
        </DockCell>
        <DockCell>
          <svg viewBox="0 0 50 68" className="w-[50px] h-[68px]">
            <path d="M2 10h46l-5 54c-1 3-35 3-36 0z" fill="#6f7072" />
            <ellipse cx="25" cy="10" rx="23" ry="8" fill="#4a4b4d" />
            <path d="M10 8l8-8 5 8 8-8 7 8z" fill="#c9c9cb" />
          </svg>
        </DockCell>
      </div>
    </div>
  );
}

export default function App() {
  return (
    <div className="w-[2560px] h-[1600px] flex flex-col bg-black overflow-hidden">
      <MenuBar />
      <div className="h-[1446px] shrink-0 flex relative">
        <div className="w-[22px] shrink-0 rounded-l-[20px] overflow-hidden flex flex-col bg-[#ececec] border-t border-[#55585b] shadow-[inset_-14px_0_14px_-10px_rgba(0,0,0,0.25)]">
          <div className="h-[168px] bg-[#3c4043]" />
          <div className="h-[128px]" />
          <div className="h-[3px] bg-[#bdbdbd]" />
        </div>
        <BrowserWindow className="w-[1350px] shrink-0 border-l border-black" />
        <div className="w-[2px] shrink-0 bg-black" />
        <BrowserWindow active className="flex-1 min-w-0 shadow-[-20px_0_36px_rgba(0,0,0,0.35)]" />
      </div>
      <Dock />
    </div>
  );
}
